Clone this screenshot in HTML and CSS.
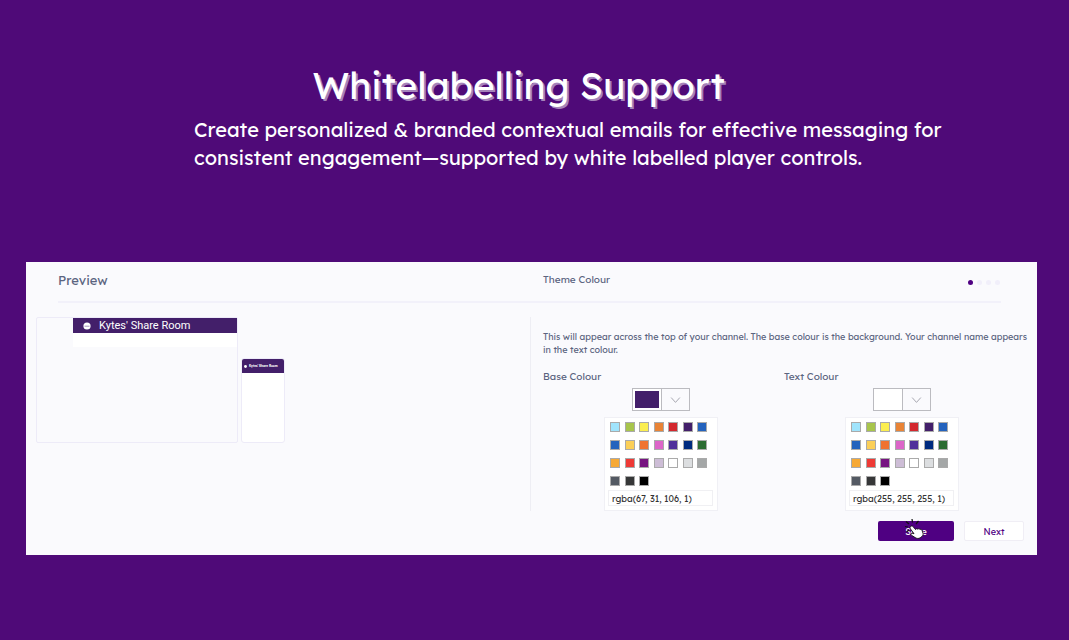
FILE: index.html
```html
<!DOCTYPE html>
<html lang="en">
<head>
    <meta charset="UTF-8">
    <meta name="viewport" content="width=device-width, initial-scale=1.0">
    <title>Whitelabelling Support</title>
    <link rel="stylesheet" href="styles.css">
</head>
<body>

    <section class="hero">
        <h1>Whitelabelling Support</h1>
        <p>Create personalized &amp; branded contextual emails for effective messaging for consistent engagement—supported by white labelled player controls.</p>
    </section>

    <main class="card">
        <header class="card-header">
            <h2 class="preview-title">Preview</h2>
            <h2 class="theme-title">Theme Colour</h2>
            <div class="dots">
                <span class="dot active"></span>
                <span class="dot"></span>
                <span class="dot"></span>
                <span class="dot"></span>
            </div>
        </header>

        <div class="card-body">
            <div class="preview">
                <div class="desktop">
                    <div class="desktop-page">
                        <div class="channel-bar">
                            <svg class="logo" viewBox="0 0 8 8"><circle cx="4" cy="4" r="3.6" fill="#fff"/><path d="M1.5 4.2h5" stroke="#a793bd" stroke-width="1"/></svg>
                            <span>Kytes' Share Room</span>
                        </div>
                    </div>
                </div>
                <div class="mobile">
                    <div class="mobile-bar">
                        <svg class="logo" viewBox="0 0 8 8"><circle cx="4" cy="4" r="3.8" fill="#fff"/></svg>
                        <span>Kytes' Share Room</span>
                    </div>
                </div>
            </div>

            <div class="settings">
                <p class="hint">This will appear across the top of your channel. The base colour is the background. Your channel name appears in the text colour.</p>
                <div class="pickers">
                    <div class="picker">
                        <label for="baseColour">Base Colour</label>
                        <button type="button" class="picker-toggle" aria-label="Choose base colour">
                            <span class="current base"></span>
                            <svg class="chevron" viewBox="0 0 28 20"><path d="M9.500 8l4.500 5 4.500-5" fill="none" stroke="#a3a3ad" stroke-width="1"/></svg>
                        </button>
                        <div class="palette">
                            <div class="swatches" id="baseSwatches"></div>
                            <input type="text" id="baseColour" value="rgba(67, 31, 106, 1)">
                        </div>
                    </div>
                    <div class="picker">
                        <label for="textColour">Text Colour</label>
                        <button type="button" class="picker-toggle" aria-label="Choose text colour">
                            <span class="current text"></span>
                            <svg class="chevron" viewBox="0 0 28 20"><path d="M9.500 8l4.500 5 4.500-5" fill="none" stroke="#a3a3ad" stroke-width="1"/></svg>
                        </button>
                        <div class="palette">
                            <div class="swatches" id="textSwatches"></div>
                            <input type="text" id="textColour" value="rgba(255, 255, 255, 1)">
                        </div>
                    </div>
                </div>
            </div>
        </div>

        <footer class="actions">
            <button type="button" class="save">Save
                <svg class="cursor" viewBox="0 0 22 22">
                    <path d="M4 8L1 7.500M5 5L2 2.500M8.500 3.500L8 0M12 5l2.500-3M5 11l-2.500 2" stroke="#111" stroke-width="1.200" fill="none"/>
                    <path d="M6.500 7.500c1-1 2.200-.5 3 .5l2 2.500c.6-1 1.700-1 2.300-.3.700-.7 1.700-.5 2.200.3.900-.4 1.700 0 2 .8l1 3c.3 1 0 2-.6 2.800l-2.200 1.700c-1.500 1-3.500.8-5-.2l-3.800-2.400c-1-.8-.2-2 1-1.800l1.600.3L6.500 10c-.6-1-.6-1.900 0-2.500z" fill="#fff" stroke="#111" stroke-width=".9"/>
                </svg>
            </button>
            <button type="button" class="next">Next</button>
        </footer>
    </main>

    <script>
        const colours = [
            '#a0e4fc', '#a8c54c', '#fbee50', '#e98436', '#d3282e', '#431f6a', '#2463bd',
            '#2463bd', '#fbcf58', '#f07330', '#dc66c8', '#50309a', '#002b7f', '#2c6c32',
            '#f6a935', '#ee3a36', '#771481', '#cdbdd6', '#ffffff', '#dcdee0', '#a4a7a7',
            '#545a63', '#363738', '#000000'
        ];

        function fillSwatches(swatchesId, inputId) {
            const swatches = document.getElementById(swatchesId);
            const input = document.getElementById(inputId);

            colours.forEach(function (colour) {
                const button = document.createElement('button');
                button.type = 'button';
                button.className = 'swatch';
                button.style.backgroundColor = colour;
                button.setAttribute('aria-label', colour);
                button.addEventListener('click', function () {
                    input.value = colour;
                });
                swatches.appendChild(button);
            });
        }

        fillSwatches('baseSwatches', 'baseColour');
        fillSwatches('textSwatches', 'textColour');
    </script>

</body>
</html>
```
FILE: styles.css
```css
* {
    box-sizing: border-box;
}

body {
    margin: 0;
    padding: 60px 32px 0 26px;
    background-color: #4f0a78;
    font-family: Lexend, Inter, sans-serif;
    font-feature-settings: "cv11";
    color: #5b6480;
}

h1, h2, p {
    margin: 0;
    font-weight: 400;
}

button, input {
    font: inherit;
    font-feature-settings: inherit;
    padding: 0;
}

.hero {
    color: #fff;
    height: 202px;
}

.hero h1 {
    padding-right: 26px;
    font-size: 37px;
    line-height: 50px;
    text-align: center;
    text-shadow: 2px 2px 0 #a583bb;
}

.hero p {
    max-width: 960px;
    margin-top: 6px;
    padding: 0 24px 0 168px;
    font-size: 20px;
    line-height: 28px;
}

.card {
    background-color: #fafafd;
    padding-bottom: 14px;
}

.card-header {
    display: grid;
    grid-template-columns: 484fr 424fr auto;
    align-items: center;
    height: 41px;
    margin: 0 36px 0 32px;
    padding-bottom: 4px;
    border-bottom: 2px solid #f2f1fa;
}

.preview-title {
    font-size: 13px;
}

.theme-title {
    font-size: 10px;
}

.dots {
    display: flex;
    gap: 4px;
    margin-right: 1px;
    padding-top: 6px;
}

.dot {
    width: 5px;
    height: 5px;
    border-radius: 50%;
    background-color: #f1effa;
}

.dot.active {
    background-color: #4f0082;
}

.card-body {
    display: grid;
    grid-template-columns: 504fr 507fr;
    margin-top: 14px;
}

.preview {
    display: flex;
    align-items: flex-end;
    align-self: start;
    gap: 3px;
    padding-left: 10px;
}

.desktop {
    width: 202px;
    height: 126px;
    padding-left: 36px;
    border: 1px solid #edebf8;
    border-radius: 2px;
}

.desktop-page {
    height: 29px;
    background-color: #fff;
}

.channel-bar {
    display: flex;
    align-items: center;
    gap: 8px;
    height: 15px;
    padding-left: 10px;
    background-color: #431f6a;
    color: #fff;
    font-family: Roboto, sans-serif;
    font-size: 11px;
}

.logo {
    width: 8px;
    height: 8px;
}

.mobile {
    width: 44px;
    height: 85px;
    border: 1px solid #edebf8;
    border-radius: 3px;
    background-color: #fff;
    overflow: hidden;
}

.mobile-bar {
    display: flex;
    align-items: center;
    gap: 2px;
    height: 14px;
    padding-left: 2px;
    background-color: #431f6a;
    color: #fff;
    font-size: 3px;
    font-weight: 700;
    white-space: nowrap;
}

.mobile-bar .logo {
    width: 3px;
    height: 3px;
}

.settings {
    padding: 13px 0 0 12px;
    border-left: 1px solid #eeeef4;
}

.hint {
    font-size: 9px;
    line-height: 13px;
}

.pickers {
    display: grid;
    grid-template-columns: 1fr 1fr;
    margin-top: 14px;
    padding-right: 12px;
}

.picker {
    display: flex;
    flex-direction: column;
    align-items: center;
    padding-right: 5px;
}

.picker label {
    align-self: flex-start;
    font-size: 10px;
    line-height: 14px;
}

.picker-toggle {
    display: flex;
    width: 58px;
    height: 23px;
    margin-top: 4px;
    border: 1px solid #bbbbc0;
    background-color: #fafafd;
}

.current {
    width: 28px;
    height: 21px;
    border: 2px solid #fff;
}

.current.base {
    background-color: #431f6a;
}

.current.text {
    background-color: #fff;
}

.chevron {
    width: 28px;
    height: 21px;
    border-left: 1px solid #bbbbc0;
}

.palette {
    width: 114px;
    margin-top: 6px;
    padding: 4px 4px 4px 3px;
    border: 1px solid #f0f0f5;
    background-color: #fff;
}

.swatches {
    display: grid;
    grid-template-columns: repeat(7, 10px);
    justify-content: space-between;
    row-gap: 8px;
    padding: 0 6px 0 2px;
}

.swatch {
    width: 10px;
    height: 10px;
    border: 1px solid #aaa;
}

.palette input {
    display: block;
    width: 100%;
    height: 16px;
    margin-top: 4px;
    padding: 0 3px;
    border: 1px solid #f0f0f3;
    color: #333;
    font-size: 9px;
}

.actions {
    display: flex;
    justify-content: flex-end;
    gap: 10px;
    margin-top: 10px;
    padding-right: 13px;
}

.actions button {
    height: 20px;
    border-radius: 2px;
    font-size: 9px;
}

.save {
    position: relative;
    width: 76px;
    border: 0;
    background-color: #4f0082;
    color: #fff;
}

.next {
    width: 60px;
    border: 1px solid #f0eef5;
    background-color: #fff;
    color: #4f0082;
}

.cursor {
    position: absolute;
    top: -2px;
    left: 26px;
    width: 22px;
    height: 22px;
}
```
